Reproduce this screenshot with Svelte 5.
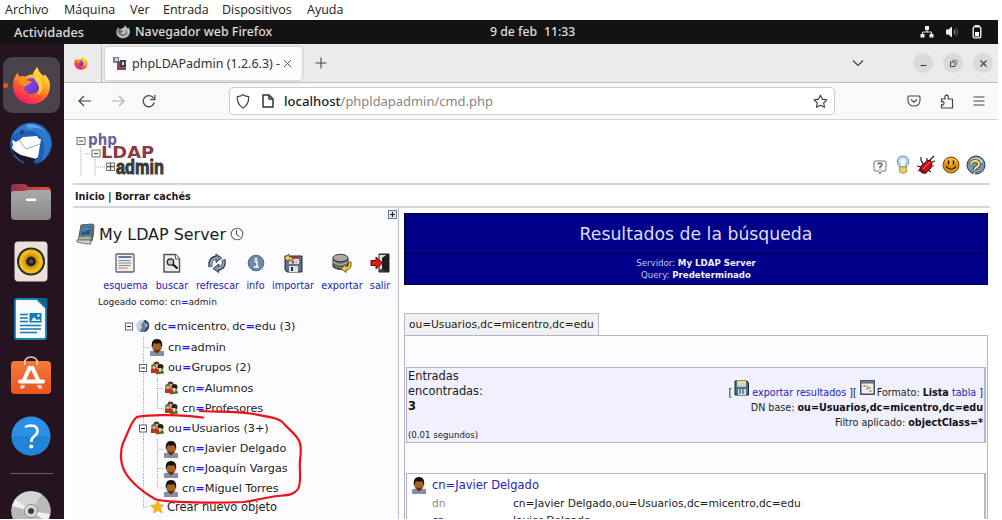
<script>
  const tools = [
    { label: 'esquema', icon: 'schema', w: 45, shift: -2 },
    { label: 'buscar', icon: 'search', w: 33, shift: -1 },
    { label: 'refrescar', icon: 'refresh', w: 43, shift: -1 },
    { label: 'info', icon: 'info', w: 18, shift: 0 },
    { label: 'importar', icon: 'import', w: 42, shift: -1 },
    { label: 'exportar', icon: 'export', w: 41, shift: 0 },
    { label: 'salir', icon: 'exit', w: 20, shift: 0 }
  ];
  // cells: b = toggle box, v = pass-through, t = branch, l = last branch
  const rows = [
    { cells: ['b'], icon: 'globe', k: 'dc', v: 'micentro', k2: 'dc', v2: 'edu (3)', h: 21 },
    { cells: ['', 't'], icon: 'user', k: 'cn', v: 'admin', h: 21 },
    { cells: ['', 'bv'], icon: 'group', k: 'ou', v: 'Grupos (2)', h: 20 },
    { cells: ['', 'v', 't'], icon: 'group', k: 'cn', v: 'Alumnos', h: 21 },
    { cells: ['', 'v', 'l'], icon: 'group', k: 'cn', v: 'Profesores', h: 19 },
    { cells: ['', 'bv'], icon: 'group', k: 'ou', v: 'Usuarios (3+)', h: 21 },
    { cells: ['', 'v', 't'], icon: 'user', k: 'cn', v: 'Javier Delgado', h: 20.5 },
    { cells: ['', 'v', 't'], icon: 'user', k: 'cn', v: 'Joaquín Vargas', h: 19 },
    { cells: ['', 'v', 'l'], icon: 'user', k: 'cn', v: 'Miguel Torres', h: 20 },
    { cells: ['', 'l'], icon: 'star', v: 'Crear nuevo objeto', h: 18 }
  ];
</script>

{#snippet firefox(s)}
  <svg width={s} height={s} viewBox="0 0 40 40">
    <defs>
      <linearGradient id="fx" x1=".85" y1="0" x2=".3" y2="1"><stop offset="0" stop-color="#fff04a" /><stop offset=".4" stop-color="#ffab27" /><stop offset=".7" stop-color="#ff5232" /><stop offset="1" stop-color="#f5156c" /></linearGradient>
      <linearGradient id="fp" x1="0" y1="0" x2="1" y2="1"><stop offset="0" stop-color="#9a45e8" /><stop offset="1" stop-color="#5b38b8" /></linearGradient>
    </defs>
    <path d="M20 39C9 39 1 31 1 20c0-6 2-10 5-13 0 2 1 3 2 4 2-1 4-1 6 0 2-2 5-3 7-2 1-3 3-6 5-8 1 4 3 6 6 9l2-1c4 4 5 8 5 11C39 32 30 39 20 39z" fill="url(#fx)" />
    <circle cx="20" cy="20.500" r="8.200" fill="url(#fp)" />
    <path d="M5 12c4 2 7 0 11 3 3 0 4 1 4 2-2 2-5 2-6 4-3 0-6-2-9-9z" fill="#ff8a22" />
    <path d="M25 6c0 4 8 9 6 18-1 3-3 5-5 6 3-6 2-11-2-15-2-3-1-6 1-9z" fill="#ffd338" opacity=".9" />
  </svg>
{/snippet}

{#snippet user()}
  <svg width="14" height="18" viewBox="0 0 14 18"><path d="M0 13h14v5H0z" fill="#8092ab" /><path d="M4 12h6l-3 5z" fill="#b9703a" /><ellipse cx="7" cy="8.5" rx="4.8" ry="6.2" fill="#a5632c" /><path d="M2 10C1 4 3 1 7 1s6 3 5 9c-1-2-1-4-2-5-2 1-4 1-6 0-1 1-1 3-2 5z" fill="#17120e" /><path d="M4 11q3 2 6 0-1 4-3 4t-3-4z" fill="#5b3218" /></svg>
{/snippet}

{#snippet glyph(n)}
  {#if n === 'globe'}
    <svg width="14" height="14" viewBox="0 0 14 14"><circle cx="7" cy="7" r="6.3" fill="#637c9d" /><path d="M2 3q3-3 6-2L7 4 5 5l1 3-2 4Q0 9 1 5z" fill="#c9d6e2" /><path d="M8 1q6 1 5 7-1 4-5 5 4-5 0-12z" fill="#2d4058" /><path d="M8 5l3-1 1 3-2 2z" fill="#93a9c0" /></svg>
  {:else if n === 'user'}
    {@render user()}
  {:else if n === 'group'}
    <svg width="14" height="14" viewBox="0 0 14 14"><circle cx="6.5" cy="3.5" r="3" fill="#4c3b26" /><circle cx="7" cy="4.5" r="1.8" fill="#e0b58b" /><path d="M1 12q-1-6 3-6t4 6z" fill="#c5301f" /><circle cx="3.500" cy="5.500" r="2.400" fill="#5d7c3a" /><circle cx="4" cy="6.6" r="1.4" fill="#efc5a4" /><path d="M6 13.500q0-5 4-5t4 4z" fill="#3c7a31" /><path d="M5 8l3 0 1 4-3 1z" fill="#c5301f" /><circle cx="10.500" cy="6" r="3" fill="#2d2115" /><path d="M8.500 7h3v3l-2 1z" fill="#e9d9c6" /></svg>
  {:else if n === 'star'}
    <svg width="14" height="14" viewBox="0 0 14 14"><path d="M8 .5l1.6 4.3 4.2.2-3.2 3 1.6 5-4.3-2.5L3.600 13l.6-4.600L.4 5.600l4.700-.8z" fill="#f5b81c" stroke="#dd9a18" stroke-width=".6" /></svg>
  {:else if n === 'schema'}
    <svg width="20" height="20" viewBox="0 0 20 20"><rect x="1" y="1" width="18" height="18" rx="1" fill="#f0f0ed" stroke="#62625f" stroke-width="1.3" /><path d="M3.500 4h13" stroke="#4b6f9f" stroke-width="1.800" /><path d="M3.500 7.500h12M3.500 10h13M3.500 12.500h12M3.500 15h9" stroke="#85878a" /></svg>
  {:else if n === 'search'}
    <svg width="20" height="20" viewBox="0 0 20 20"><path d="M2 1.500h11.500l4 4V19H2z" fill="#ecece8" stroke="#55534f" stroke-width="1.400" /><path d="M13.500 1.500V6h4" fill="#fff" stroke="#55534f" /><circle cx="8.500" cy="9" r="3.200" fill="#c5ccd0" stroke="#222" stroke-width="1.300" /><path d="M11 11.500l4.500 4" stroke="#111" stroke-width="2.200" /></svg>
  {:else if n === 'refresh'}
    <svg width="20" height="20" viewBox="0 0 20 20"><g fill="none" stroke="#2c3c4e" stroke-width="4"><path d="M3.500 14Q2 5 10 4.500" /><path d="M16.500 6.500q2 8-6 9.500" /></g><path d="M9 1l5.500 4L9 9.500zM12 11l-6 4.500 5.500 4z" fill="#7893b0" stroke="#2c3c4e" /><g fill="none" stroke="#91a8c0" stroke-width="2"><path d="M3.800 13.500Q2.500 5.500 10 4.800" /><path d="M16.500 7q1.500 7.500-6 8.500" /></g></svg>
  {:else if n === 'info'}
    <svg width="20" height="20" viewBox="0 0 20 20"><circle cx="10" cy="10" r="7.800" fill="#6d89ad" stroke="#53677f" /><circle cx="10" cy="6" r="1.300" fill="#fff" /><path d="M8 8.500h3V14M7.800 14h5" fill="none" stroke="#fff" stroke-width="1.500" /></svg>
  {:else if n === 'import'}
    <svg width="20" height="20" viewBox="0 0 20 20"><path d="M2 3h17v16H4l-2-2z" fill="#5b7187" stroke="#252b32" /><path d="M6 4h10v7H6z" fill="#f3eeee" /><path d="M6 4h10v2H6z" fill="#c43d32" /><path d="M7 8h8M7 10h8" stroke="#a9a9a9" /><path d="M6 13h9v6H6z" fill="#dde1e4" /><path d="M8 14h2v4H8z" fill="#27323d" /><path d="M1 5l5-4v2.500q5 0 4 7Q9 6.500 6 6.500V9z" fill="#ead36b" stroke="#695416" /></svg>
  {:else if n === 'export'}
    <svg width="20" height="20" viewBox="0 0 20 20"><path d="M1 5v9q7.500 5 15 0V5z" fill="#696c6c" stroke="#292b2b" /><ellipse cx="8.500" cy="5" rx="7.500" ry="3.700" fill="#a9acab" stroke="#353737" /><path d="M1 9q7.500 5 15 0" fill="none" stroke="#adb0ae" stroke-width="1.200" /><path d="M19 9q1 8-5 8v2.500L9 15.500l5-4V14q3 0 2.500-5z" fill="#f0cf45" stroke="#715913" /></svg>
  {:else if n === 'exit'}
    <svg width="20" height="20" viewBox="0 0 20 20"><path d="M9 1h10v18H9z" fill="#46534c" stroke="#1b201d" /><path d="M16 2l3-1v18l-7-2V4z" fill="#1b211e" /><path d="M9.500 2H16l-4 3v11H9.500z" fill="#dfe4dc" /><path d="M1 7.500h5V4l6.500 6L6 16v-3.500H1z" fill="#df1b16" stroke="#5e0a07" /></svg>
  {/if}
{/snippet}

<div class="screen">
  <nav class="menu"><span class="m1">Archivo</span><span class="m2">Máquina</span><span class="m3">Ver</span><span class="m4">Entrada</span><span class="m5">Dispositivos</span><span>Ayuda</span></nav>

  <div class="top">
    <span class="act">Actividades</span>
    <svg class="gfx" width="14" height="14" viewBox="0 0 40 40"><path d="M20 38C9 38 1 31 1 20c0-6 2-10 5-13l3 5h6c2-4 6-4 7-4l4-7 7 9 3-2c3 4 4 8 4 12C39 31 30 38 20 38z" fill="#bcbcbc" /><path d="M3 12l12 3 6 2-7 5q2 8 12 4 6-7-1-14 9 5 6 14-7 8-15 5Q4 26 3 12z" fill="#6b6b6b" /></svg>
    <span class="app">Navegador web Firefox</span>
    <span class="date">9 de feb</span><span class="time">11:33</span>
    <span class="tray">
      <svg width="14" height="14" viewBox="0 0 14 14"><path d="M5 1h4v4H5zM.5 9h4v3.500h-4zM9.500 9h4v3.500h-4z" fill="#eee" /><path d="M7 4v3M2.500 10V7h9v3" fill="none" stroke="#eee" /></svg>
      <svg width="14" height="14" viewBox="0 0 14 14"><path d="M1 4.500h2.500L7 1.500v11l-3.500-3H1z" fill="#eee" /><path d="M9 4.500q2 2.500 0 5" fill="none" stroke="#aaa" /><path d="M11 3q3 4 0 8" fill="none" stroke="#666" /></svg>
      <svg width="14" height="14" viewBox="0 0 14 14"><path d="M4.500 0h5v2h-5z" fill="#eee" /><rect x="3.200" y="1.900" width="7.600" height="11" rx="1.300" fill="none" stroke="#eee" stroke-width="1.400" /><path d="M5 7h4v4.500H5z" fill="#fff" /></svg>
    </span>
  </div>

  <div class="body">
    <aside class="dock">
      <div class="tile"><i class="dot"></i>{@render firefox(39)}</div>
      <svg class="d tb" width="44" height="44" viewBox="0 0 44 44">
        <circle cx="22" cy="21.500" r="21" fill="#1c5fb4" /><path d="M3 14Q12-1 27 3q14 5 15 19-1 11-10 18 6-12 1-24Q22 2 3 14z" fill="#3079c9" /><path d="M16 3q12-4 22 8Q30 4 21 7z" fill="#59a0e2" /><circle cx="13" cy="10" r="2" fill="#163f7e" />
        <path d="M10 18l4-3 14-1 2 3 2 0-1 6-2 12-3 2-16-4-7-7 1-3-1-5 4 2z" fill="#fff" /><path d="M10 18l7 9 14-5" fill="none" stroke="#a5a5a5" /><path d="M3 28l9 5 15 4-3 3q2 1 4 0l-5 4Q8 43 3 28z" fill="#251320" /><path d="M5 33q4 5 10 8" fill="none" stroke="#2260a5" stroke-width="1.500" />
      </svg>
      <svg class="d fo" width="42" height="38" viewBox="0 0 42 38"><defs><linearGradient id="fg"><stop offset="0" stop-color="#8b2f55" /><stop offset="1" stop-color="#e4562c" /></linearGradient><linearGradient id="fb" x2="0" y2="1"><stop offset="0" stop-color="#aaa" /><stop offset="1" stop-color="#888" /></linearGradient></defs><path d="M1 8V4q0-3 3-3h11l4 3h18q4 0 4 5v5H1z" fill="url(#fg)" /><path d="M1 11q0-3 3-3h10l4-1h20q3 0 3 3v23q0 4-4 4H5q-4 0-4-4z" fill="url(#fb)" /><rect x="16" y="15.500" width="10" height="2.500" rx=".8" fill="#fff" /></svg>
      <svg class="d rh" width="34" height="41" viewBox="0 0 34 41"><rect x=".5" y=".5" width="33" height="40" rx="4" fill="#e9e1d9" /><circle cx="17" cy="20.500" r="14" fill="#2b2b2b" /><circle cx="17" cy="20.500" r="12" fill="#f3bd18" /><circle cx="17" cy="20.500" r="8.200" fill="#d79c10" /><circle cx="17" cy="20.500" r="5" fill="#242424" /><circle cx="17" cy="20.500" r="2" fill="#555" /></svg>
      <svg class="d wr" width="34" height="42" viewBox="0 0 34 42"><path d="M3 1h20l9 9v29q0 2-2 2H3q-2 0-2-2V3q0-2 2-2z" fill="#f7fafc" stroke="#1685ba" stroke-width="1.800" /><path d="M23 0h9q1.500 0 1.500 2v9z" fill="#0e638f" /><g stroke="#1478ae" stroke-width="1.600"><path d="M6 16.500h8M6 20h8M6 23.500h8M6 27.500h21M6 31h21M6 34.500h17" /></g><rect x="15.500" y="15" width="12" height="9.500" fill="#147aaf" /><path d="M17 23l3-4 3 3 2-1 1.500 2z" fill="#d8f2ff" /><circle cx="24.500" cy="17.500" r="1.200" fill="#fff" /></svg>
      <svg class="d so" width="42" height="40" viewBox="0 0 42 40"><defs><linearGradient id="sg" x2="0" y2="1"><stop offset="0" stop-color="#f57a3b" /><stop offset="1" stop-color="#e95420" /></linearGradient></defs><path d="M14.500 9q0-7 6.500-7t6.500 7" fill="none" stroke="#dfc7bd" stroke-width="1.600" /><rect x="1" y="6" width="40" height="33" rx="4" fill="url(#sg)" /><path d="M14.500 10q0-3 1-5M27.500 10q0-3-1-5" fill="none" stroke="#f5ddd3" stroke-width="1.400" /><path d="M14 25l5.500-12h3L28 25M10 26.500h23" fill="none" stroke="#fff" stroke-width="4" stroke-linecap="round" /><path d="M11 30h4l-1 3.500h-4zM27 30h4l1.500 3.500h-4z" fill="#f8dfd3" /></svg>
      <svg class="d he" width="40" height="40" viewBox="0 0 40 40"><circle cx="20" cy="20" r="19.500" fill="#2a91e4" /><path d="M.5 20h39A19.500 19.500 0 0 1 .5 20z" fill="#2284d5" /><path d="M14.500 11.500q1-2 6-2 6 .3 6 5.500 0 3-3.500 5.500-2.800 2-2.800 5.500" fill="none" stroke="#fff" stroke-width="2.600" /><circle cx="20.200" cy="30.500" r="2" fill="#fff" /></svg>
      <i class="sep"></i>
      <svg class="d di" width="40" height="40" viewBox="0 0 40 40"><circle cx="20" cy="20" r="19.800" fill="#b9b9b7" /><path d="M20 20L3 10Q9 0 20 .2q7 0 11 3z" fill="#d4d4d2" /><path d="M20 20L4 8l-3 7zM20 20l19 3-3 8z" fill="#f1f1ef" /><circle cx="20" cy="20" r="6.500" fill="#ddd" stroke="#8d8d8d" /><circle cx="20" cy="20" r="3" fill="#3b3239" stroke="#777" /></svg>
    </aside>

    <main class="win">
      <div class="tabs">
        <span class="pin">{@render firefox(14)}</span>
        <div class="tab">
          <svg width="14" height="14" viewBox="0 0 14 14"><path d="M0 1h6v6H0z" fill="#777d9b" /><path d="M2 2h3v3H2z" fill="#cfd2e0" /><path d="M4 5h3v6h6v3H4z" fill="#934450" /><path d="M7 4h6v7H7z" fill="#444" /><path d="M9 6h2v3H9z" fill="#ddd" /></svg>
          <span class="ttl">phpLDAPadmin (1.2.6.3) -</span>
          <svg width="9" height="9" viewBox="0 0 9 9"><path d="M1 1l7 7M8 1L1 8" stroke="#555" /></svg>
        </div>
        <svg class="plus" width="12" height="12" viewBox="0 0 12 12"><path d="M6 .5v11M.5 6h11" stroke="#444" stroke-width="1.100" /></svg>
        <svg class="chev" width="12" height="8" viewBox="0 0 12 8"><path d="M1 1.500l5 5 5-5" fill="none" stroke="#444" stroke-width="1.200" /></svg>
        <span class="wb"><svg width="9" height="9" viewBox="0 0 9 9"><path d="M1.500 6.500h6" stroke="#444" stroke-width="1.100" /></svg></span>
        <span class="wb"><svg width="9" height="9" viewBox="0 0 9 9"><path d="M1.500 3h4.500v4.500H1.500z" fill="none" stroke="#444" /><path d="M3 1.300h5V6" fill="none" stroke="#888" /></svg></span>
        <span class="wb"><svg width="9" height="9" viewBox="0 0 9 9"><path d="M1.500 1.500l6 6M7.500 1.500l-6 6" stroke="#444" stroke-width="1.200" /></svg></span>
      </div>
      <div class="bar">
        <svg class="back" width="14" height="12" viewBox="0 0 14 12"><path d="M13 6H1.500M6 1L1 6l5 5" fill="none" stroke="#444" stroke-width="1.200" /></svg>
        <svg class="fwd" width="14" height="12" viewBox="0 0 14 12"><path d="M1 6h11.500M8 1l5 5-5 5" fill="none" stroke="#b2b2b2" stroke-width="1.200" /></svg>
        <svg class="rel" width="14" height="14" viewBox="0 0 14 14"><path d="M12.300 8.500A5.600 5.600 0 1 1 11.500 4M12.800 1v4.500H8.300" fill="none" stroke="#444" stroke-width="1.300" /></svg>
        <div class="url">
          <svg width="14" height="15" viewBox="0 0 14 15"><path d="M7 .8q2.500 1.700 5.700 1.900Q13 10.500 7 14 1 10.500 1.300 2.700 4.500 2.500 7 .8z" fill="none" stroke="#444" stroke-width="1.200" /></svg>
          <svg class="doc" width="12" height="14" viewBox="0 0 12 14"><path d="M1 1h6l4 4v8H1zM7 1v4h4" fill="none" stroke="#333" stroke-width="1.500" stroke-linejoin="round" /></svg>
          <span class="host">localhost</span><span class="path">/phpldapadmin/cmd.php</span>
          <svg class="fav" width="15" height="15" viewBox="0 0 15 15"><path d="M7.500 1.200l2 4 4.400.6-3.200 3.100.8 4.400-4-2.100-4 2.100.8-4.400L1.100 5.800l4.400-.6z" fill="none" stroke="#444" stroke-width="1.200" stroke-linejoin="round" /></svg>
        </div>
        <span class="right">
          <svg width="14" height="12" viewBox="0 0 14 12"><path d="M2 1h10q1 0 1 1v3.500Q12.500 11 7 11T1 5.500V2q0-1 1-1zM4 4.500l3 2.700 3-2.700" fill="none" stroke="#444" stroke-width="1.100" /></svg>
          <svg width="14" height="15" viewBox="0 0 14 15"><path d="M1.500 14V10.500q2.500 1 2.500-1.300T1.500 8V5h3.700q-1-3.500 1.300-3.800Q9 1.300 8.200 5h4.300v9z" fill="none" stroke="#444" stroke-width="1.200" stroke-linejoin="round" /></svg>
          <svg width="12" height="10" viewBox="0 0 12 10"><path d="M.5 1h11M.5 5h11M.5 9h11" stroke="#444" stroke-width="1.100" /></svg>
        </span>
      </div>

      <div class="page">
        <header>
          <svg class="logo" width="90" height="46" viewBox="0 0 90 46">
            <path d="M5 14v29M9 21h7M19 26v17M20 34h10" stroke="#aaa" stroke-dasharray="1 1" />
            <g fill="#f3f3f3" stroke="#777"><rect x="1" y="4.500" width="8" height="7" /><rect x="16" y="17" width="8" height="7" /><rect x="30.500" y="30" width="8" height="7.500" /></g>
            <path d="M3 8h4M18 20.500h4M31 33.700h7M34.500 30v7.500" stroke="#555" stroke-width="1.200" />
            <text x="12" y="12" font-family="DejaVu Sans, sans-serif" font-weight="700" font-size="15" textLength="29" lengthAdjust="spacingAndGlyphs" fill="#6464a4">php</text>
            <text x="25" y="25" font-family="DejaVu Sans, sans-serif" font-weight="700" font-size="16.500" textLength="53" lengthAdjust="spacingAndGlyphs" fill="#8e3848">LDAP</text>
            <text x="40" y="41" font-family="Liberation Sans, sans-serif" font-weight="700" font-size="19.500" textLength="48" lengthAdjust="spacingAndGlyphs" fill="#3a3a3a" stroke="#3a3a3a" stroke-width="1">admin</text>
          </svg>
          <div class="hicons">
            <svg class="bubble" width="14" height="15" viewBox="0 0 14 15"><path d="M2 1h10q1 0 1 1v8q0 1-1 1H8.500L7 14l-1.500-3H2q-1 0-1-1V2q0-1 1-1z" fill="#fafafa" stroke="#777" /><path d="M5 4.500q0-1.300 2-1.300T9 4.700Q9 6 7 6.600V8M7 9v1" fill="none" stroke="#444" stroke-width="1.200" /></svg>
            <svg width="14" height="20" viewBox="0 0 14 20"><path d="M4 12Q1 9 1.200 6 2 1 7 1t5.800 5Q13 9 10 12z" fill="#bdd3ef" stroke="#7590b4" /><path d="M4 5q3-3 6 0L8.500 11h-3z" fill="#eff7ff" /><path d="M3.500 12h7v5q-3.500 3-7 0z" fill="#e7cf5c" stroke="#a68d31" stroke-width=".8" /></svg>
            <svg width="20" height="20" viewBox="0 0 20 20"><path d="M7 9L5 5 5 2M5 12L1 11M6 15l-4 1M11 6l0-3M14 5l4-4M16 7l3-1M14 11l4 0M12 15l3 2M9 16l0 3" fill="none" stroke="#222" stroke-width="1.200" /><path d="M5 11l6-5 3-1 2 3-1 5-5 5-4 0-2-3z" fill="#c60f1a" stroke="#500309" /><path d="M6 15l8-8" stroke="#ff767b" /><path d="M4 12l5 5-3 1-3-3z" fill="#7a0a12" /></svg>
            <svg width="18" height="18" viewBox="0 0 18 18"><circle cx="9" cy="9" r="8" fill="#dc9015" stroke="#7a4c0a" /><ellipse cx="9" cy="5.500" rx="6" ry="3.500" fill="#f1b33a" /><path d="M6.500 4.500v4M11.500 4.500v4" stroke="#2c1a02" stroke-width="1.600" /><path d="M4 10.500q5 5.500 10 0" fill="none" stroke="#2c1a02" stroke-width="1.200" /></svg>
            <svg width="20" height="20" viewBox="0 0 20 20"><circle cx="10" cy="10" r="9" fill="#7793ae" stroke="#24384e" /><path d="M3 6q7-7 14 0-2 5-14 0z" fill="#c3d6e6" /><path d="M5 9q0-3 4-3 4 0 4 3 0 2-3 3.500-1.500 1-1.500 2.500M8.500 17v2" fill="none" stroke="#3a330f" stroke-width="3.600" /><path d="M5 9q0-3 4-3 4 0 4 3 0 2-3 3.500-1.500 1-1.500 2.300M8.500 17.200v1.700" fill="none" stroke="#efe597" stroke-width="2" /></svg>
          </div>
        </header>
        <div class="crumb">Inicio | Borrar cachés</div>
        <div class="cols">
          <section class="left">
            <div class="exp"><svg width="9" height="9" viewBox="0 0 9 9"><rect x=".5" y=".5" width="8" height="8" fill="#dfe8f4" stroke="#6c7a8e" /><path d="M4.500 2v5M2 4.500h5" stroke="#223" stroke-width="1.200" /></svg></div>
            <div class="server">
              <svg width="19" height="22" viewBox="0 0 19 22"><path d="M5 2l11-1 2 1-1 12-14 0z" fill="#7d898b" stroke="#475152" /><path d="M6.500 3.500l8.500-.8-1 9-9.300.6z" fill="#22578d" /><path d="M7 4l7.500-.5-.4 3-8 3z" fill="#4c80b2" /><path d="M15.500 2L18 3l-1 14-3 3z" fill="#5b6769" /><path d="M3 13.500l12-.5 0 4-13 0z" fill="#aab3ae" stroke="#68716d" /><path d="M1 17l13 0 1 4-4 0-10-2z" fill="#ced3cd" stroke="#727a75" /></svg>
              <span>My LDAP Server</span>
              <svg width="14" height="14" viewBox="0 0 14 14"><circle cx="7" cy="7" r="5.800" fill="#fff" stroke="#666" stroke-width="1.100" /><path d="M6.500 3v4.500l3 2" fill="none" stroke="#444" /></svg>
            </div>
            <div class="tools">
              {#each tools as t}
                <div class="tool" style="width:{t.w}px"><span class="ic" style="margin-left:{t.shift}px">{@render glyph(t.icon)}</span><a>{t.label}</a></div>
              {/each}
            </div>
            <div class="logged">Logeado como: cn<b>=</b>admin</div>
            <div class="tree">
              {#each rows as r}
                <div class="row" style="height:{r.h}px">
                  {#each r.cells as c}
                    <svg class="cell" width="14" height="100%">
                      {#if c === 'v' || c === 't' || c === 'bv'}<line x1="7.500" y1="0" x2="7.500" y2="100%" />{/if}
                      {#if c === 'l'}<line x1="7.500" y1="0" x2="7.500" y2="50%" />{/if}
                      {#if c === 't' || c === 'l'}<line x1="7.500" y1="50%" x2="14" y2="50%" />{/if}
                      {#if c[0] === 'b'}<svg y="50%" overflow="visible"><rect x="3.500" y="-3.500" width="7" height="7" fill="#fff" stroke="#666" /><path d="M5 0h4" stroke="#222" /></svg>{/if}
                    </svg>
                  {/each}
                  <span class="ticon">{@render glyph(r.icon)}</span>
                  <span class="name" class:new={!r.k}>{#if r.k}{r.k}<b>=</b>{/if}{r.v}{#if r.k2}<em>,</em><span class="second">{r.k2}<b>=</b>{r.v2}</span>{/if}</span>
                </div>
              {/each}
            </div>
          </section>

          <section class="res">
            <h1>Resultados de la búsqueda</h1>
            <div class="sub"><div>Servidor: <b>My LDAP Server</b></div><div>Query: <b>Predeterminado</b></div></div>
            <div class="base">ou=Usuarios,dc=micentro,dc=edu</div>
            <div class="box">
              <div class="sum">
                <div class="found"><div>Entradas</div><div>encontradas:</div><div><b>3</b></div><small>(0.01 segundos)</small></div>
                <div class="opts">
                  <div class="o1">
                    <span class="ob">[</span>
                    <svg class="oi" width="15" height="16" viewBox="0 0 15 16"><path d="M1 1h12l1.500 2v12H1z" fill="#4d7185" stroke="#17262e" /><path d="M3 1h9v4H3z" fill="#ead68d" /><path d="M3 6h9" stroke="#dce8ed" stroke-width="1.500" /><path d="M4 9h8v6H4z" fill="#cbdde4" /><path d="M6 9v5M9 9v5" stroke="#3e6174" stroke-width="1.300" /></svg>
                    <a class="ex">exportar resultados</a><span class="br">][</span>
                    <svg class="oi" width="15" height="15" viewBox="0 0 15 15"><rect x=".8" y=".8" width="13.400" height="13.400" fill="#f2f2e8" stroke="#2e3338" stroke-width="1.300" /><path d="M1 2.500h13" stroke="#566b80" stroke-width="2" /><path d="M4 5v2M4 6h3M8 6v3M6 9h2M10 7v2M9 11h3" stroke="#8d8068" stroke-width="1.200" /></svg>
                    <span class="fm">Formato: <b>Lista</b> <a>tabla</a> ]</span>
                  </div>
                  <div>DN base: <b>ou=Usuarios,dc=micentro,dc=edu</b></div>
                  <div>Filtro aplicado: <b>objectClass=*</b></div>
                </div>
              </div>
              <div class="entry">
                <div class="eh">{@render user()}<a>cn=Javier Delgado</a></div>
                <div class="er"><span class="gray">dn</span><span class="dn">cn=Javier Delgado,ou=Usuarios,dc=micentro,dc=edu</span></div>
                <div class="er"><a>cn</a><span>Javier Delgado</span></div>
              </div>
            </div>
          </section>
        </div>
      </div>
    </main>
  </div>

  <svg class="mark" width="998" height="519" viewBox="0 0 998 519"><path d="M203 417.500C184 415 151 414 137 417C132 419 128 433 123 443C120 451 120 463 125 472C130 481 142 492 155 499C166 503 218 503 244 502C258 500 268 497 278 496C288 495 294 495 298 489C302 482 299 469 300 460C301 454 301 448 300 443C298 436 290 430 285 425C280 417 267 417 254 414C236 411 216 412 200 411" /></svg>
</div>

<style>
  :global(body) { background: #fff; overflow: hidden; }
  .screen, .screen * { box-sizing: border-box; }
  .screen { position: relative; width: 998px; height: 519px; overflow: hidden; display: flex; flex-direction: column; background: #fff; font-family: "DejaVu Sans", sans-serif; color: #1c1c1c; white-space: nowrap; }
  svg { display: block; flex: none; }
  span { flex: none; }
  a { color: #2424b8; }
  .menu { flex: none; display: flex; height: 20px; padding-left: 5px; font: 12.5px/19px "Open Sans", sans-serif; color: #222; }
  .m1 { width: 59px; } .m2 { width: 66px; } .m3 { width: 33px; } .m4 { width: 59px; } .m5 { width: 85px; }
  .top { flex: none; display: flex; align-items: center; height: 24px; background: #131313; color: #dedede; font: 500 12.4px/24px "Noto Sans", sans-serif; padding-left: 14px; }
  .act { width: 102px; font-size: 12.800px; }
  .gfx { margin-right: 5px; }
  .app { width: 355px; } .date { width: 54px; font-size: 12.300px; } .time { font-size: 12.200px; }
  .tray { margin-left: auto; display: flex; gap: 11px; padding-right: 14px; }
  .body { flex: 1; min-height: 0; display: flex; }
  .dock { width: 64px; flex: none; background: #251320; display: flex; flex-direction: column; align-items: center; padding-top: 13px; padding-right: 2px; }
  .tile { flex: none; width: 57px; height: 56px; border-radius: 9px; background: #4a424b; display: flex; align-items: center; justify-content: center; position: relative; }
  .dot { position: absolute; left: 0; top: 26px; width: 5px; height: 5px; border-radius: 50%; background: #e95420; }
  .tb { margin-top: 9px; } .fo { margin-top: 17px; } .rh { margin-top: 20px; } .wr { margin-top: 16px; } .so { margin-top: 15px; } .he { margin-top: 21px; } .di { margin-top: 17px; }
  .sep { flex: none; width: 43px; height: 1px; margin-top: 17px; background: #6b5e68; }
  .win { flex: 1; min-width: 0; display: flex; flex-direction: column; }
  .tabs { flex: none; height: 39px; display: flex; align-items: center; background: #ebebeb; border-bottom: 1px solid #bdbdbd; }
  .pin { width: 38px; height: 38px; border-right: 1px solid #c0c0c0; display: flex; align-items: center; justify-content: center; padding-right: 3px; }
  .tab { width: 197px; height: 33px; margin-left: 3px; background: #fcfcfc; border-radius: 3px; box-shadow: 0 0 3px #8888; display: flex; align-items: center; padding-left: 8px; }
  .ttl { font: 12.500px "Noto Sans", sans-serif; margin-left: 5px; width: 150px; color: #333; }
  .tab svg:last-child { margin-left: 1px; }
  .plus { margin-left: 13px; }
  .chev { margin-left: auto; margin-right: 49px; }
  .wb { width: 20px; height: 20px; border-radius: 50%; background: #dadada; display: flex; align-items: center; justify-content: center; margin-right: 10px; }
  .wb:last-child { margin-right: 5px; }
  .bar { flex: none; height: 37px; display: flex; align-items: center; background: #f9f9fa; border-bottom: 1px solid #d4d4d4; }
  .back { margin-left: 14px; } .fwd { margin-left: 19px; } .rel { margin-left: 17px; }
  .url { width: 606px; height: 28px; margin-left: 73px; border: 1px solid #ccc; border-radius: 4px; background: #fff; display: flex; align-items: center; padding: 0 6px; font: 12.950px "Noto Sans", sans-serif; }
  .doc { margin: 0 10px 0 12px; }
  .host { font-size: 13.100px; font-weight: 500; } .path { color: #858585; }
  .fav { margin-left: auto; }
  .right { margin-left: auto; display: flex; align-items: center; gap: 19px; padding-right: 13px; }
  .page { flex: 1; min-height: 0; background: #fff; padding: 0 8px 0 9px; }
  header { height: 65px; border-bottom: 2px solid #d4d4e4; display: flex; justify-content: space-between; padding: 13px 4px 0 3px; }
  .hicons { display: flex; gap: 6px; align-items: center; height: 20px; margin-top: 22px; }
  .bubble { margin: 4px 3px 0 0; }
  .crumb { height: 23px; border-bottom: 2px solid #d4d4e4; font: bold 9.740px/23px "DejaVu Sans", sans-serif; padding-left: 2px; }
  .cols { display: flex; height: 311px; }
  .left { width: 326px; flex: none; background: #fcfcfe; border-right: 1px solid #b9b9d4; }
  .exp { display: flex; justify-content: flex-end; padding: 2px 1px 0 0; height: 13px; }
  .server { display: flex; align-items: center; height: 26px; padding-left: 3px; gap: 4px; font-size: 15.940px; }
  .server svg:last-child { margin-left: 0; }
  .tools { display: flex; gap: 7.500px; padding: 6px 0 0 30px; height: 45px; }
  .tool { display: flex; flex-direction: column; align-items: center; font-size: 9.700px; line-height: 14px; }
  .ic { margin-bottom: 6px; }
  .logged { height: 22px; font-size: 9.060px; line-height: 21px; padding-left: 25px; }
  b { color: #1a1aff; }
  .res b { color: #111; }
  .tree { padding: 1.500px 0 0 49px; }
  .row { display: flex; align-items: center; }
  .cell line { stroke: #aaa; stroke-dasharray: 1 1; }
  .ticon { width: 14px; display: flex; justify-content: center; }
  .name { font-size: 11.250px; margin-left: 4px; letter-spacing: -.02px; }
  .name.new { font-size: 11.500px; margin-left: 3px; }
  .second { margin-left: 2px; }
  em { color: #e33; font-style: normal; }
  .res { width: 584px; margin: 5px 0 0 5px; }
  h1 { margin: 0; height: 41px; font: 17.280px/40px "DejaVu Sans", sans-serif; text-align: center; background: #00008b; color: #dedef4; border: 1px solid #000030; }
  .sub { height: 31px; background: #00008b; border: 1px solid #000030; border-top: 0; color: #c8c8e8; text-align: center; font-size: 8.650px; line-height: 12px; padding-top: 3px; }
  .sub b { color: #f2f2ff; }
  .base { width: 195px; height: 22px; margin-top: 28px; border: 1px solid #b7b7ca; border-bottom: 0; background: #f1f1f1; font-size: 10.620px; line-height: 21px; padding-left: 4px; }
  .box { height: 200px; border: 1px solid #b4b4d2; background: #fcfcfe; padding: 31px 1px 0; }
  .sum { height: 76px; border: 1px solid #b4b4d2; border-right-width: 2px; background: #f0f0ff; display: flex; justify-content: space-between; padding: 1px 1px 0; }
  .found { font-size: 11.420px; line-height: 15.200px; }
  .found small { display: block; font-size: 8.620px; margin-top: 13px; }
  .opts { font-size: 9.600px; line-height: 15.200px; text-align: right; padding-top: 16px; }
  .o1 { display: flex; height: 15px; }
  .oi { margin-top: -5px; }
  .ob { margin-right: 2px; } .ex { margin-left: 3px; } .br { margin: 0 3px; } .fm { margin-left: 2px; }
  .entry { height: 80px; margin-top: 30px; border: 1px solid #b4b4d2; border-right-width: 2px; background: #fff; }
  .eh { display: flex; align-items: center; height: 21px; padding-left: 5px; gap: 6px; font-size: 11.500px; }
  .eh a { padding-top: 1px; }
  .er { display: grid; grid-template-columns: 81px auto; padding-left: 25px; font-size: 10.650px; line-height: 17px; }
  .gray { color: #888; }
  .mark { position: absolute; left: 0; top: 0; }
  .mark path { fill: none; stroke: #ee101a; stroke-width: 2.200; stroke-linecap: round; }
</style>
